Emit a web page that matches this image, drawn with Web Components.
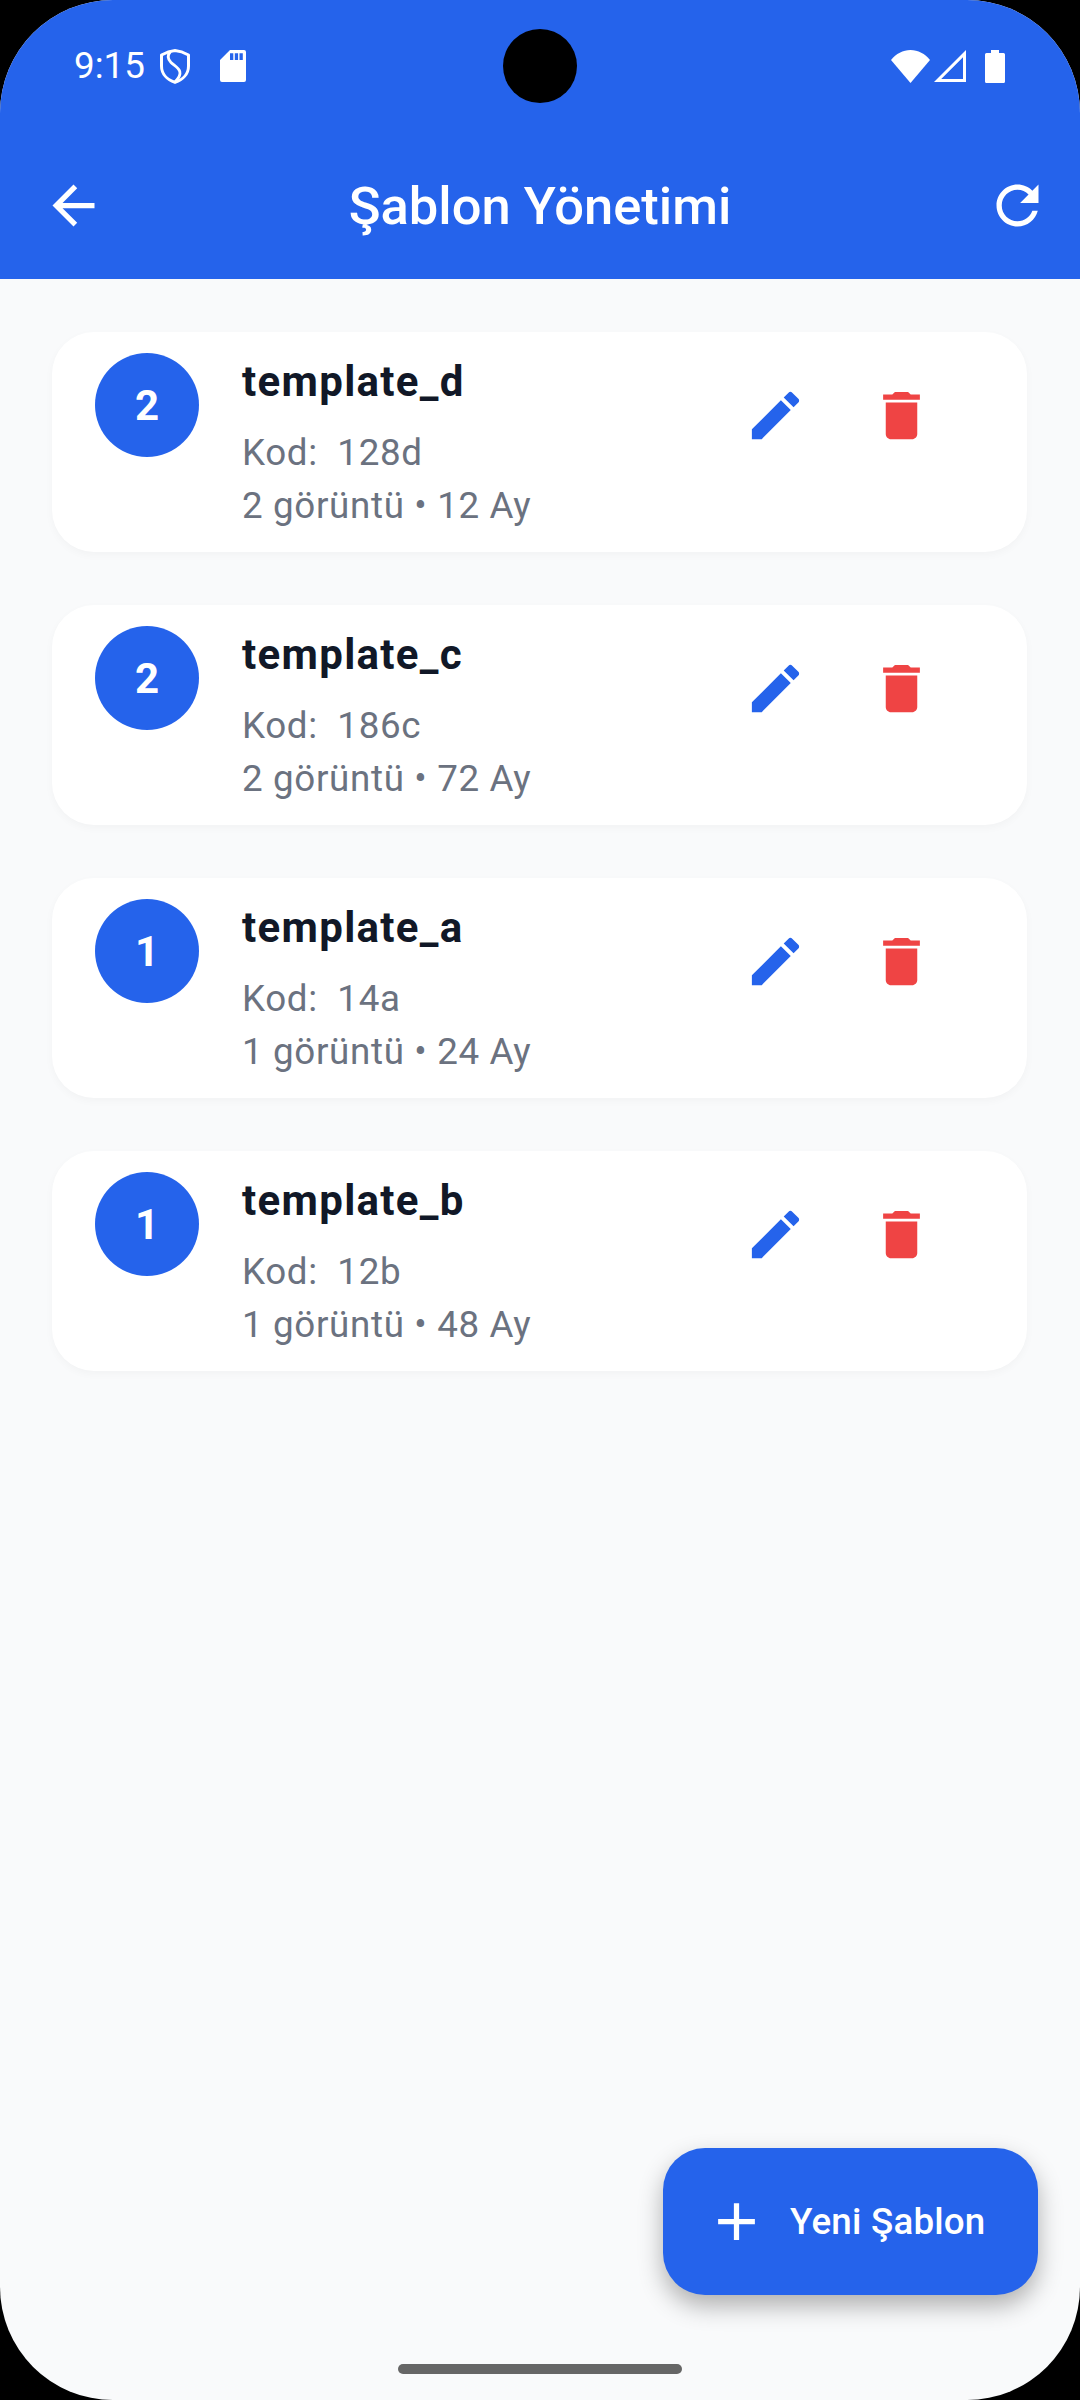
<!DOCTYPE html>
<html lang="tr">
<head>
<meta charset="utf-8">
<title>Şablon Yönetimi</title>
<style>
  html { background: #000; }
  body { margin: 0; font-family: Roboto, "Liberation Sans", sans-serif; }
</style>
</head>
<body>
<app-screen>
  <app-header title-text="Şablon Yönetimi"></app-header>
  <template-list>
    <template-card count="2">
      <span slot="name">template_d</span>
      <span slot="code">Kod:  128d</span>
      <span slot="meta">2 görüntü • 12 Ay</span>
    </template-card>
    <template-card count="2">
      <span slot="name">template_c</span>
      <span slot="code">Kod:  186c</span>
      <span slot="meta">2 görüntü • 72 Ay</span>
    </template-card>
    <template-card count="1">
      <span slot="name">template_a</span>
      <span slot="code">Kod:  14a</span>
      <span slot="meta">1 görüntü • 24 Ay</span>
    </template-card>
    <template-card count="1">
      <span slot="name">template_b</span>
      <span slot="code">Kod:  12b</span>
      <span slot="meta">1 görüntü • 48 Ay</span>
    </template-card>
  </template-list>
  <add-button>Yeni Şablon</add-button>
</app-screen>

<script>
const screenTemplate = document.createElement('template');
screenTemplate.innerHTML = `
  <style>
    :host {
      position: relative;
      display: flex;
      flex-direction: column;
      width: 1080px;
      height: 2400px;
      overflow: hidden;
      border-radius: 113px;
      background: #f9fafb;
    }
    .home {
      position: absolute;
      left: 398px;
      bottom: 26px;
      width: 284px;
      height: 10px;
      border-radius: 5px;
      background: #666;
    }
  </style>
  <slot></slot>
  <div class="home"></div>
`;

class AppScreen extends HTMLElement {
  constructor() {
    super();
    this.attachShadow({ mode: 'open' }).appendChild(screenTemplate.content.cloneNode(true));
  }
}

const headerTemplate = document.createElement('template');
headerTemplate.innerHTML = `
  <style>
    :host {
      position: relative;
      display: block;
      flex: none;
      height: 279px;
      background: #2563eb;
      color: #fff;
    }
    .status {
      display: flex;
      align-items: center;
      justify-content: space-between;
      height: 132px;
      padding: 0 75px;
    }
    .status-left, .status-right {
      display: flex;
      align-items: center;
    }
    .time {
      font-size: 36.750px;
      line-height: 1;
      width: 70px;
      margin-left: -1px;
      white-space: nowrap;
    }
    .shield { margin-left: 16px; }
    .sd { margin-left: 30px; }
    .signal { margin-left: 4px; }
    .battery { margin-left: 19px; }
    .camera {
      position: absolute;
      left: 503px;
      top: 29px;
      width: 74px;
      height: 74px;
      border-radius: 50%;
      background: #000;
    }
    .bar {
      display: grid;
      grid-template-columns: 1fr auto 1fr;
      align-items: center;
      height: 147px;
    }
    .title {
      margin-top: 2px;
      font-size: 52.500px;
      font-weight: 500;
      line-height: 1;
      white-space: nowrap;
    }
    svg { display: block; }
    .back { margin-left: 42px; }
    .refresh { justify-self: end; margin-right: 31px; }
  </style>
  <div class="status">
    <div class="status-left">
      <span class="time">9:15</span>
      <svg class="shield" width="30" height="35" viewBox="0 0 30 35" fill="none" stroke="#fff">
        <path stroke-width="3" stroke-linejoin="round" d="M15 1.600C19 2 24 3.600 28.500 6V17c0 7.800-5.600 13.800-13.500 16.400C7.100 30.800 1.500 24.800 1.500 17V6C6 3.600 11 2 15 1.600Z"/>
        <path stroke-width="2.800" d="M10.500 2.500C7.500 6 7.500 10 11 13.500c3 3 7.500 5 8.800 9 .8 3-1.300 7-4.800 10.500"/>
      </svg>
      <svg class="sd" width="26" height="32" viewBox="0 0 26 32">
        <path fill="#fff" fill-rule="evenodd" d="M10 0h14a2 2 0 0 1 2 2v28a2 2 0 0 1-2 2H2a2 2 0 0 1-2-2V10ZM10 3.300V10h3.300V3.300ZM14.800 3.300V10h3.300V3.300ZM19.500 3.300V10h3.300V3.300Z"/>
      </svg>
    </div>
    <div class="status-right">
      <svg width="39" height="33" viewBox="0 0 39 33">
        <path fill="#fff" d="M19.500 33 0 10C5 3.800 12 0 19.500 0S34 3.800 39 10Z"/>
      </svg>
      <svg class="signal" width="32" height="32" viewBox="0 0 32 32">
        <path fill="#fff" fill-rule="evenodd" d="M32 0V32H0ZM29 7.200 7.200 29H29Z"/>
      </svg>
      <svg class="battery" width="20" height="33" viewBox="0 0 20 33">
        <path fill="#fff" d="M6 0h8v3h4.500A1.500 1.500 0 0 1 20 4.500v27a1.500 1.500 0 0 1-1.500 1.500h-17A1.500 1.500 0 0 1 0 31.500v-27A1.500 1.500 0 0 1 1.500 3H6Z"/>
      </svg>
    </div>
  </div>
  <div class="camera"></div>
  <div class="bar">
    <svg class="back" width="63" height="63" viewBox="0 0 24 24" fill="#fff">
      <path d="M20 11H7.830l5.590-5.590L12 4l-8 8 8 8 1.410-1.410L7.830 13H20v-2z"/>
    </svg>
    <div class="title"></div>
    <svg class="refresh" width="63" height="63" viewBox="0 0 24 24" fill="#fff">
      <path d="M17.650 6.350C16.200 4.900 14.210 4 12 4c-4.420 0-7.990 3.580-7.990 8s3.570 8 7.990 8c3.730 0 6.840-2.550 7.730-6h-2.080c-.82 2.330-3.040 4-5.650 4-3.310 0-6-2.690-6-6s2.690-6 6-6c1.660 0 3.140.69 4.220 1.780L13 11h7V4l-2.350 2.350z"/>
    </svg>
  </div>
`;

class AppHeader extends HTMLElement {
  constructor() {
    super();
    this.attachShadow({ mode: 'open' }).appendChild(headerTemplate.content.cloneNode(true));
  }

  connectedCallback() {
    this.shadowRoot.querySelector('.title').textContent = this.getAttribute('title-text');
  }
}

const listTemplate = document.createElement('template');
listTemplate.innerHTML = `
  <style>
    :host {
      display: flex;
      flex-direction: column;
      gap: 53px;
      padding: 53px 53px 0 52px;
    }
  </style>
  <slot></slot>
`;

class TemplateList extends HTMLElement {
  constructor() {
    super();
    this.attachShadow({ mode: 'open' }).appendChild(listTemplate.content.cloneNode(true));
  }
}

const cardTemplate = document.createElement('template');
cardTemplate.innerHTML = `
  <style>
    :host {
      display: flex;
      align-items: flex-start;
      box-sizing: border-box;
      height: 220px;
      padding: 21px 62.500px 0 43px;
      border-radius: 42px;
      background: #fff;
      box-shadow: 0 3px 8px rgba(17, 24, 39, 0.03);
    }
    .count {
      flex: none;
      display: flex;
      align-items: center;
      justify-content: center;
      width: 104px;
      height: 104px;
      border-radius: 50%;
      background: #2563eb;
      color: #fff;
      font-size: 42px;
      font-weight: 700;
    }
    .text {
      flex: 1;
      display: flex;
      flex-direction: column;
      margin: 1px 0 0 43px;
    }
    .name {
      color: #111827;
      font-size: 42px;
      font-weight: 700;
      letter-spacing: 1.310px;
      line-height: 56px;
    }
    .line {
      color: #6b7280;
      font-size: 36.750px;
      letter-spacing: 0.656px;
      line-height: 54px;
      white-space: pre;
    }
    .code { margin-top: 16px; margin-bottom: -1px; }
    .action {
      flex: none;
      display: flex;
      align-items: center;
      justify-content: center;
      width: 126px;
      height: 126px;
      margin-top: -1px;
    }
    svg { display: block; }
  </style>
  <div class="count"></div>
  <div class="text">
    <div class="name"><slot name="name"></slot></div>
    <div class="line code"><slot name="code"></slot></div>
    <div class="line"><slot name="meta"></slot></div>
  </div>
  <div class="action">
    <svg width="63" height="63" viewBox="0 0 24 24" fill="#2563eb">
      <path d="M3 17.250V21h3.750L17.810 9.940l-3.750-3.750L3 17.250zM20.710 7.040c.39-.39.39-1.020 0-1.410l-2.340-2.340c-.39-.39-1.020-.39-1.410 0l-1.830 1.830 3.750 3.750 1.830-1.830z"/>
    </svg>
  </div>
  <div class="action">
    <svg width="63" height="63" viewBox="0 0 24 24" fill="#ef4444">
      <path d="M6 19c0 1.100.9 2 2 2h8c1.100 0 2-.9 2-2V7H6v12zM19 4h-3.500l-1-1h-5l-1 1H5v2h14V4z"/>
    </svg>
  </div>
`;

class TemplateCard extends HTMLElement {
  constructor() {
    super();
    this.attachShadow({ mode: 'open' }).appendChild(cardTemplate.content.cloneNode(true));
  }

  connectedCallback() {
    this.shadowRoot.querySelector('.count').textContent = this.getAttribute('count');
  }
}

const addTemplate = document.createElement('template');
addTemplate.innerHTML = `
  <style>
    :host {
      position: absolute;
      right: 42px;
      bottom: 105px;
      display: flex;
      align-items: center;
      box-sizing: border-box;
      width: 375px;
      height: 147px;
      padding-left: 42px;
      border-radius: 42px;
      background: #2563eb;
      color: #fff;
      font-size: 36.750px;
      font-weight: 500;
      letter-spacing: 0.200px;
      box-shadow: 0 11px 24px rgba(0, 0, 0, 0.3);
    }
    svg { display: block; flex: none; margin-right: 22px; }
    span { white-space: nowrap; }
  </style>
  <svg width="63" height="63" viewBox="0 0 24 24" fill="#fff">
    <path d="M19 13h-6v6h-2v-6H5v-2h6V5h2v6h6v2z"/>
  </svg>
  <span><slot></slot></span>
`;

class AddButton extends HTMLElement {
  constructor() {
    super();
    this.attachShadow({ mode: 'open' }).appendChild(addTemplate.content.cloneNode(true));
  }
}

customElements.define('app-screen', AppScreen);
customElements.define('app-header', AppHeader);
customElements.define('template-list', TemplateList);
customElements.define('template-card', TemplateCard);
customElements.define('add-button', AddButton);
</script>
</body>
</html>
